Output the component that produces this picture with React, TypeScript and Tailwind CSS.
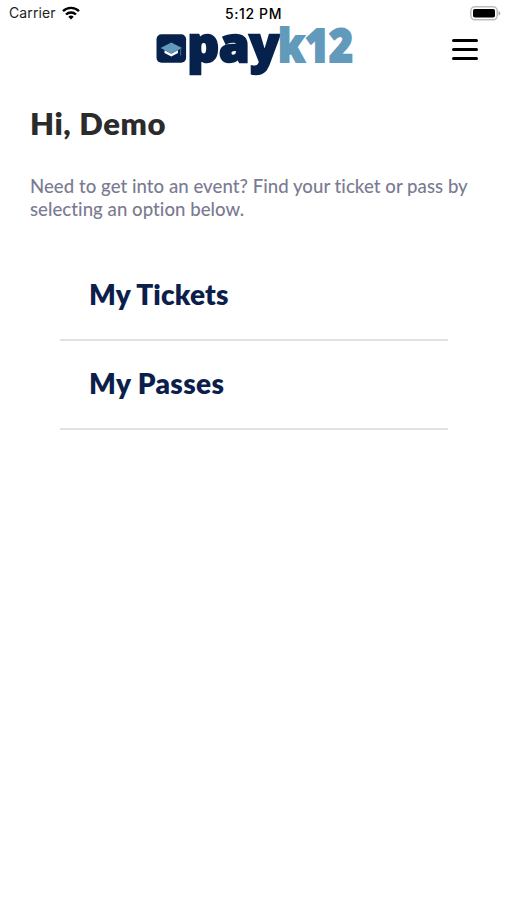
import React from "react";

function StatusBar() {
  return (
    <div className="relative flex h-[26px] items-center justify-between pl-[9px] pr-[6px] font-[Inter,sans-serif] text-black">
      <div className="flex items-center gap-[6px]">
        <span className="text-[14px] leading-[26px] tracking-[0.1px] text-[#222]">Carrier</span>
        <svg width="18" height="14" viewBox="0 0 18 14" fill="none" stroke="#000" strokeWidth="2.4">
          <path d="M1 5.2a11.4 11.4 0 0 1 16 0" />
          <path d="M4 8.5a7.1 7.1 0 0 1 10 0" />
          <path d="M9 13.5 6.3 10.8a3.8 3.8 0 0 1 5.4 0z" fill="#000" stroke="none" />
        </svg>
      </div>
      <svg width="31" height="15" viewBox="0 0 31 15">
        <rect x="0.8" y="0.8" width="26.4" height="13" rx="4" fill="#fff" stroke="#bdbdbd" strokeWidth="1.5" />
        <rect x="3" y="3" width="22" height="8.6" rx="1.8" fill="#000" />
        <path d="M28.5 5v4.6c1.1-.4 1.8-1.3 1.8-2.3s-.7-1.9-1.8-2.3z" fill="#aaa" />
      </svg>
      <span className="absolute left-[225px] top-0 whitespace-nowrap text-[14px] font-medium leading-[27px] tracking-[0.6px]">5:12 PM</span>
    </div>
  );
}

function Logo() {
  return (
    <svg className="block overflow-visible" width="200" height="54" viewBox="154 24 200 54">
      <rect x="156.5" y="34.3" width="29.6" height="28.4" rx="5" fill="#06224c" />
      <path d="M171.3 42.5 182 48l-10.7 5.5L160.600 48z" fill="#629abb" />
      <path d="M164.500 50.300 171.300 53.800 178 50.300v2.700l-6.700 3.600-6.800-3.600z" fill="#fff" />
      <path d="M180.700 49.200v6.300" stroke="#47718f" strokeWidth="1" />
      <g fontFamily="Open Sans, sans-serif" fontWeight="800">
        <text x="187.500" y="62" fontSize="48" textLength="92" lengthAdjust="spacingAndGlyphs" fill="#06224c" stroke="#06224c" strokeWidth="2.400">pay</text>
        <text x="278" y="62" fontSize="46" textLength="75" lengthAdjust="spacingAndGlyphs" fill="#629abb" stroke="#629abb" strokeWidth="1.800">k12</text>
      </g>
    </svg>
  );
}

function Header() {
  return (
    <header className="flex h-[54px] items-center justify-between pl-[154px] pr-[29px] -mt-[2px]">
      <Logo />
      <button aria-label="Menu" className="mb-[3px] flex w-[26px] flex-col gap-[6.300px]">
        <span className="h-[3px] rounded-sm bg-black" />
        <span className="h-[3px] rounded-sm bg-black" />
        <span className="h-[3px] rounded-sm bg-black" />
      </button>
    </header>
  );
}

export default function App() {
  return (
    <div className="h-[900px] w-[507px] overflow-hidden bg-white font-[Lato,sans-serif]">
      <StatusBar />
      <Header />
      <main className="px-[30px] pt-[25px]">
        <h1 className="text-[31px] font-extrabold leading-[40px] tracking-[0.600px] text-[#2b2b2b]">Hi, Demo</h1>
        <p className="mt-[32px] whitespace-nowrap text-[18.600px] font-medium leading-[23px] tracking-[0.040px] text-[#7b7b92]">
          Need to get into an event? Find your ticket or pass by
          <br />
          selecting an option below.
        </p>
        <nav className="mx-[30px] mt-[30px] w-[388px]">
          <a className="flex h-[90px] items-center border-b-2 border-[#e0e1e3] pb-[2px] pl-[29px] text-[28px] font-extrabold tracking-[0.2px] text-[#0c1f4c]">My Tickets</a>
          <a className="flex h-[89px] items-center border-b-2 border-[#e0e1e3] pb-[3px] pl-[29px] text-[28px] font-extrabold tracking-[0.4px] text-[#0c1f4c]">My Passes</a>
        </nav>
      </main>
    </div>
  );
}
